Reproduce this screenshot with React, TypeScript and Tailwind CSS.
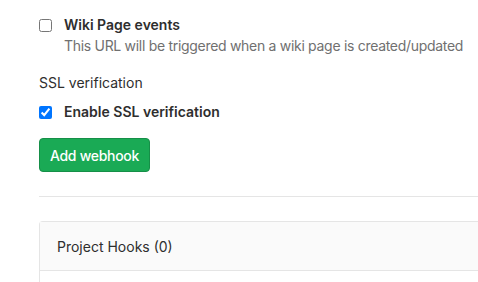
export default function App() {
  return (
    <div
      className="w-[478px] h-[282px] overflow-hidden bg-white text-[14px] text-[#2e2e2e]"
      style={{ fontFamily: 'Inter, "Noto Sans", sans-serif' }}
    >
      <div className="pl-[39px] pt-[15px]">
        <label className="flex items-start gap-[12px]">
          <input type="checkbox" className="mt-[4px] w-[13px] h-[13px] shrink-0" />
          <div className="whitespace-nowrap">
            <div className="font-semibold leading-[20px]">Wiki Page events</div>
            <div className="text-[#707070] leading-[20px] mt-[1px] tracking-[-0.3px]">
              This URL will be triggered when a wiki page is created/updated
            </div>
          </div>
        </label>

        <div className="mt-[17px] leading-[20px]">SSL verification</div>

        <label className="flex items-center gap-[12px] mt-[9px]">
          <input type="checkbox" defaultChecked className="w-[13px] h-[13px]" />
          <span className="font-semibold leading-[20px]">Enable SSL verification</span>
        </label>

        <button className="mt-[16px] h-[34px] px-[10px] rounded-[4px] border border-[#168f48] bg-[#1aaa55] text-white font-medium tracking-[-0.3px]">
          Add webhook
        </button>

        <div className="mt-[24px] border-t border-[#e5e5e5]" />

        <div className="mt-[24px] border border-[#e5e5e5] rounded-tl-[4px] border-r-0">
          <div className="h-[49px] bg-[#fafafa] border-b border-[#e5e5e5] flex items-center pl-[17px]">
            Project Hooks (0)
          </div>
          <div className="h-[20px]" />
        </div>
      </div>
    </div>
  );
}
